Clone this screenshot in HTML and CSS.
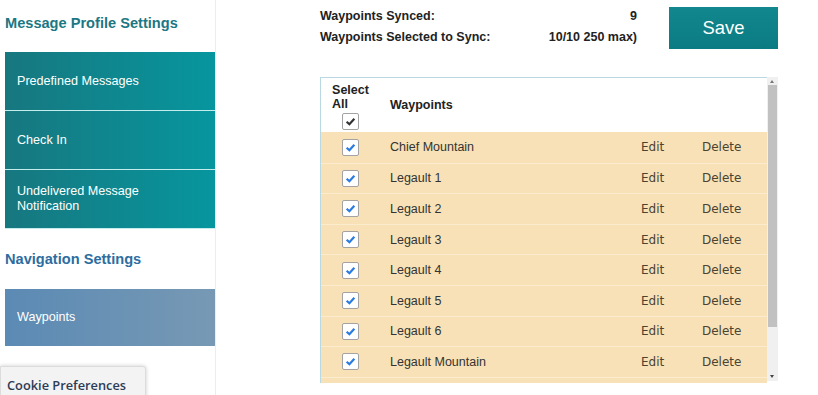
FILE: index.html
```html
<!DOCTYPE html>
<html lang="en">
<head>
    <meta charset="UTF-8">
    <title>Waypoints</title>
    <link rel="stylesheet" href="styles.css">
</head>
<body>
    <div class="page">
        <div class="sidebar">
            <div class="side-title teal">Message Profile Settings</div>
            <div class="nav-item">Predefined Messages</div>
            <div class="nav-item">Check In</div>
            <div class="nav-item">Undelivered Message<br>Notification</div>
            <div class="side-title blue">Navigation Settings</div>
            <div class="nav-item active">Waypoints</div>
        </div>

        <div class="main">
            <div class="top-bar">
                <div class="sync-info">
                    <div class="info-row"><span>Waypoints Synced:</span><span>9</span></div>
                    <div class="info-row"><span>Waypoints Selected to Sync:</span><span>10/10 250 max)</span></div>
                </div>
                <button class="save-btn">Save</button>
            </div>

            <div class="table-box">
                <div class="table-scroll">
                    <div class="table-head">
                        <div class="select-all">
                            <span>Select<br>All</span>
                            <span class="check dark"><svg viewBox="0 0 10 10"><path d="M1.5 5.2 L4 7.5 L8.5 2.5"/></svg></span>
                        </div>
                        <div class="cell">Waypoints</div>
                    </div>
                    <div id="rows"></div>
                </div>
                <div class="scrollbar">
                    <div class="arrow up"></div>
                    <div class="track"><div class="thumb"></div></div>
                    <div class="arrow down"></div>
                </div>
            </div>
        </div>
    </div>

    <button class="cookie-btn">Cookie Preferences</button>

    <script>
        // waypoint rows
        const names = ['Chief Mountain', 'Legault 1', 'Legault 2', 'Legault 3', 'Legault 4',
            'Legault 5', 'Legault 6', 'Legault Mountain'];
        const check = '<span class="check"><svg viewBox="0 0 10 10"><path d="M1.5 5.2 L4 7.5 L8.5 2.5"/></svg></span>';
        let html = '';
        names.forEach(function (name) {
            html += '<div class="row">' +
                '<div class="cell center">' + check + '</div>' +
                '<div class="cell">' + name + '</div>' +
                '<div class="cell action">Edit</div>' +
                '<div class="cell action">Delete</div>' +
                '</div>';
        });
        // next row, scrolled out of view
        html += '<div class="row"><div class="cell center">' + check + '</div></div>';
        document.getElementById('rows').innerHTML = html;
    </script>
</body>
</html>
```

FILE: styles.css
```css
body {
    margin: 0;
    font-family: "Liberation Sans", Arial, sans-serif;
    background-color: white;
    color: #222;
    overflow: hidden;
}

.page {
    display: flex;
    height: 395px;
}

.sidebar {
    width: 215px;
    border-right: 1px solid #f4ecdc;
    flex-shrink: 0;
}

.side-title {
    height: 52px;
    padding-left: 5px;
    display: flex;
    align-items: center;
    font-size: 14.6px;
    font-weight: bold;
}

.side-title.teal {
    height: 46px;
    padding-bottom: 6px;
    color: #1c7783;
}

.side-title.blue {
    height: 60px;
    color: #2d6d9f;
}

.nav-item {
    margin-left: 5px;
    height: 58px;
    padding-left: 12px;
    display: flex;
    align-items: center;
    color: white;
    font-size: 12.6px;
    line-height: 15px;
    background: linear-gradient(to right, #17777f, #07969e);
    border-bottom: 1px solid #c4ecec;
}

.nav-item.active {
    height: 57px;
    border-bottom: none;
    background: linear-gradient(to right, #5b8ab4, #7799b4);
}

.main {
    margin-left: 104px;
    width: 458px;
}

.top-bar {
    display: flex;
    height: 77px;
}

.sync-info {
    width: 317px;
    padding-top: 6px;
    font-size: 12.5px;
    font-weight: bold;
}

.info-row {
    display: flex;
    justify-content: space-between;
    line-height: 21px;
}

.save-btn {
    margin: 7px 0 0 32px;
    width: 109px;
    height: 42px;
    border: none;
    background: linear-gradient(#12878e, #0b7b82);
    color: white;
    font-family: "Liberation Sans", Arial, sans-serif;
    font-size: 18.4px;
    padding: 0;
}

.table-box {
    display: flex;
    height: 306px;
    width: 458px;
}

.table-scroll {
    flex: 1;
    overflow: hidden;
    border-top: 1px solid #b8d8e2;
    border-left: 1px solid #b8d8e2;
}

.table-head {
    display: grid;
    grid-template-columns: 59px 1fr;
    height: 54px;
    background-color: white;
    font-size: 12.5px;
    font-weight: bold;
}

.select-all {
    display: flex;
    flex-direction: column;
    align-items: center;
    line-height: 14px;
    padding-top: 5px;
}

.select-all .check {
    margin-top: 2px;
}

.table-head .cell {
    align-self: center;
    padding-left: 10px;
}

.row {
    display: grid;
    grid-template-columns: 59px 251px 61px 1fr;
    height: 30.6px;
    box-sizing: border-box;
    border-top: 1px solid #fbecce;
    background-color: #f8e1b6;
    align-items: center;
    font-size: 12.5px;
    color: #333;
}

.row:first-child {
    border-top: none;
}

.cell {
    padding-left: 10px;
}

.cell.center {
    padding-left: 0;
    display: flex;
    justify-content: center;
}

.cell.action {
    font-family: "DejaVu Sans", Verdana, sans-serif;
    font-size: 12px;
    color: #4b4331;
}

.check {
    display: inline-block;
    width: 17px;
    height: 17px;
    box-sizing: border-box;
    border: 1px solid #a3a3a3;
    border-radius: 2px;
    background-color: white;
}

.check svg {
    display: block;
    width: 11px;
    height: 11px;
    margin: 2px;
    fill: none;
    stroke: #2a7be0;
    stroke-width: 2;
}

.check.dark svg {
    stroke: #333;
}

.scrollbar {
    width: 11px;
    display: flex;
    flex-direction: column;
    background-color: #f0f0f0;
    height: 304px;
}

.arrow {
    height: 8px;
    position: relative;
}

.arrow.up::after,
.arrow.down::after {
    content: "";
    position: absolute;
    left: 3px;
    border-left: 2.5px solid transparent;
    border-right: 2.5px solid transparent;
}

.arrow.up::after {
    top: 3px;
    border-bottom: 3px solid #777;
}

.arrow.down::after {
    top: 2px;
    border-top: 3px solid #444;
}

.track {
    flex: 1;
}

.thumb {
    margin: 0 1px;
    height: 242px;
    background-color: #c1c1c1;
}

.cookie-btn {
    position: absolute;
    left: 0;
    top: 366px;
    width: 146px;
    height: 32px;
    padding: 5px 0 0 6px;
    text-align: left;
    border: 1px solid #dcdcdc;
    border-radius: 0 3px 0 0;
    background-color: #f3f3f3;
    box-shadow: 0 0 4px rgba(0, 0, 0, 0.2);
    color: #2c3c56;
    font-family: "Open Sans", sans-serif;
    font-size: 12.8px;
    font-weight: 600;
    line-height: 26px;
    align-items: flex-start;
    display: flex;
}
```
